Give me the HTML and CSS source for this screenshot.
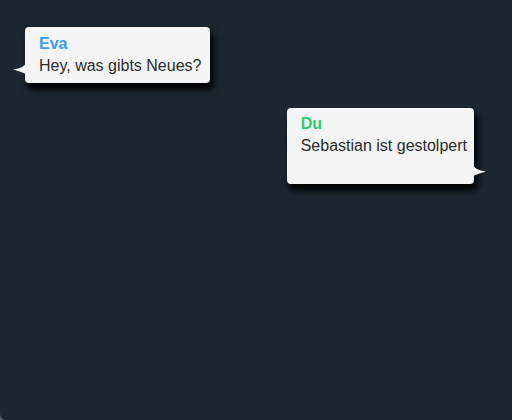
FILE: index.html
```html
<!DOCTYPE html>
<html lang="de">
<head>
<meta charset="utf-8">
<title>Chat</title>
<link rel="stylesheet" href="styles.css">
</head>
<body>
<main class="chat">
  <div class="msg msg-in">
    <div class="author author-eva">Eva</div>
    <div class="text">Hey, was gibts Neues?</div>
    <svg class="tail tail-left" width="13" height="13" viewBox="0 0 13 13"><path d="M13 0 Q12 6 0 7.5 Q7 9 13 12 Z" fill="#f5f5f5"/></svg>
  </div>
  <div class="msg msg-out">
    <div class="author author-du">Du</div>
    <div class="text">Sebastian ist gestolpert</div>
    <svg class="tail tail-right" width="13" height="13" viewBox="0 0 13 13"><path d="M0 0 Q1 6 13 7.5 Q6 9 0 12 Z" fill="#f5f5f5"/></svg>
  </div>
</main>
</body>
</html>
```
FILE: styles.css
```css
html {
  background: #5b636c;
  margin: 0;
  height: 100%;
}
body {
  margin: 0;
  min-height: 100%;
  height: 420px;
  background: #1d2734;
  border-bottom-left-radius: 6px;
  font-family: "Liberation Sans", Arial, sans-serif;
  font-size: 16px;
  line-height: 22px;
  color: #2b2b2b;
}
.chat {
  display: flex;
  flex-direction: column;
  align-items: flex-start;
  gap: 25px;
  padding: 27px 38px 0 25px;
}
.msg {
  position: relative;
  background: #f5f5f5;
  border-radius: 4px;
  padding: 6px 9px 6px 14px;
  box-shadow: 3px 6px 7px 1px rgba(0, 0, 0, 0.95);
}
.msg-out {
  align-self: flex-end;
  padding: 5px 7px 27px 14px;
}
.author {
  font-weight: bold;
}
.author-eva {
  color: #3d9ce8;
}
.author-du {
  color: #2ecc71;
}
.tail {
  position: absolute;
  display: block;
}
.tail-left {
  left: -12px;
  bottom: 8px;
}
.tail-right {
  right: -12px;
  bottom: 7px;
}
```
